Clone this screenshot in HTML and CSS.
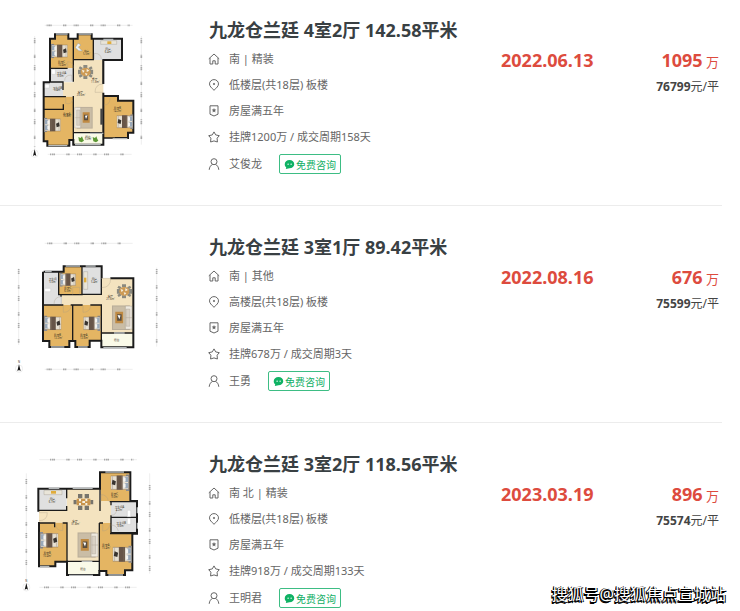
FILE: index.html
```html
<!DOCTYPE html>
<html lang="zh-CN">
<head>
    <meta charset="UTF-8">
    <meta name="viewport" content="width=device-width, initial-scale=1.0">
    <title>九龙仓兰廷 成交记录</title>
    <link rel="stylesheet" href="styles.css">
</head>
<body>
    <svg class="defs" aria-hidden="true">
        <symbol id="home" viewBox="0 0 12 12"><path d="M.8 5.8 6 1l5.200 4.800M2 5v6h2.800V7.800h2.400V11H10V5" /></symbol>
        <symbol id="pin" viewBox="0 0 12 12"><path d="M6 11.300C3.500 8.800 1.500 7.200 1.500 4.900a4.500 4.300 0 0 1 9 0C10.500 7.200 8.500 8.800 6 11.300Z" /><circle cx="6" cy="5" r=".7" /></symbol>
        <symbol id="badge" viewBox="0 0 12 12"><path d="M2 .8h8v8.400L6 11 2 9.200Z" /><path class="solid" d="m6 2.900.7 1.500 1.600.2-1.200 1.200.3 1.600L6 6.600l-1.400.8.3-1.600-1.200-1.200 1.600-.2Z" /></symbol>
        <symbol id="star" viewBox="0 0 12 12"><path d="m6 .9 1.700 3 3.600.8-2.200 2.500.3 3.800L6 9.900 2.600 11l.3-3.800L.7 4.700l3.600-.8Z" /></symbol>
        <symbol id="user" viewBox="0 0 12 12"><circle cx="6" cy="3.700" r="3" /><path d="M1.200 11.800C1.400 8.900 3 7 4.600 6.400M7.400 6.400C9 7 10.600 8.900 10.800 11.800" /></symbol>
        <symbol id="chat" viewBox="0 0 12 12"><path d="M6 1.200c3 0 5.200 1.900 5.200 4.400S9 10 6 10L2 11l.4-2C1.300 8.200.8 7 .8 5.600.8 3.100 3 1.200 6 1.200Z" fill="#0fb264" /><circle cx="4.500" cy="5.600" r=".8" fill="#fff" /><circle cx="7.800" cy="5.600" r=".8" fill="#fff" /></symbol>

        <!-- furniture -->
        <symbol id="bed" viewBox="0 0 50 44">
            <path d="M0 0h9v44H0z" fill="#8b8d90" /><path d="M2 4h48v36H2z" fill="#e7e0d2" stroke="#675548" />
            <path d="M3 6h9v14H3zM3 23h9v14H3z" fill="#9aa9b9" /><path d="M10 9h6v10h-6zM10 25h6v10h-6z" fill="#f5f3ef" />
            <path d="M18 3h16v38H18z" fill="#675548" /><path d="M21 3v38M45 5v34" stroke="#8f7e6d" />
            <path d="m36 18 9-4 2 12-9 3z" fill="#38332f" />
        </symbol>
        <symbol id="dining" viewBox="0 0 46 42">
            <path d="M16 0h12v9H16zM16 33h12v9H16zM0 14h10v14H0zM36 14h10v14H36zM6 4l9 5-5 6-8-5zM40 4l-9 5 5 6 8-5zM6 38l9-5-5-6-8 5zM40 38l-9-5 5-6 8 5z" fill="#8b8a80" />
            <ellipse cx="23" cy="21" rx="15" ry="13" fill="#cd9a54" /><path d="m12 14 8 3-5 7zM26 11l8 6-8 4zM21 24l8 2-5 6z" fill="#f6f2e3" />
        </symbol>
        <symbol id="dining-long" viewBox="0 0 60 48">
            <path d="M14 0h13v13H14zM34 0h13v13H34zM14 35h13v13H14zM34 35h13v13H34zM0 18h10v13H0zM51 18h10v13H51z" fill="#77746c" />
            <path d="M10 14h41v20H10z" fill="#c9944c" /><path d="M17 15h6v7h-6zM36 15h6v7h-6zM17 27h6v6h-6zM36 27h6v6h-6zM27 21h8v6h-8z" fill="#f6f2e3" />
        </symbol>
        <symbol id="sofa" viewBox="0 0 54 66">
            <path d="M6 0h48v66H6z" fill="#b9ad99" /><path d="M9 3h42v60H9z" fill="#cabda6" />
            <path d="M0 2h18v62H0z" fill="#eee9df" stroke="#92877a" /><path d="M6 10h10v46H6zM0 33h17" fill="#d9d1c4" stroke="#a69b8c" />
            <path d="M24 17h21v31H24z" fill="#bf8a43" /><path d="M28 24h12v17H28z" fill="#594e40" /><path d="m31 27 8-1-5 11z" fill="#fff" />
        </symbol>
        <symbol id="north" viewBox="0 0 24 40"><circle cx="12" cy="26" r="11" fill="none" stroke="#ccc" /><path d="m12 13-5 20 5-3 5 3z" fill="#171717" /></symbol>
    </svg>

    <main class="deals">
        <article class="deal">
            <svg class="plan" viewBox="0 -10 570 480" role="img" aria-label="4室2厅户型图">
                <path class="dims" d="M134 36H398M143 423H395M104 68V410M424 68V394" />
                <path class="marks" d="M140 36H390M150 423H386M104 75V400M424 75V385" />
                <path class="hall" d="M220 140H310V370H220V250H189V207H220Z" />
                <path class="wood" d="M150 76H165V63H205V76H233V63H275V76H280V138H220V165H150ZM131 250H220V380H208V396H142V384H131ZM310 248H354V262H400V358H384V374H310Z" />
                <path class="tile" d="M282 76H366V140H282ZM150 165H220V206H150ZM131 207H189V250H131Z" />
                <path class="balcony" d="M220 358H310V394H220Z" />
                <path class="wall" d="M150 206V76H165V63H205V76H233V63H275V76H366V140H310V212M310 238V248H354V262H400V358H384V374H345M310 248V394H220V380H208V397H142V384H131V207H150" />
                <path class="wall thin" d="M220 76V205M280 76V139H222M150 165H203M150 206H189V230M131 250H198M220 248V394M131 288H190V273M222 358H308M310 140V212M310 374H345" />
                <path class="window" d="M168 62H203M236 62H274M310 78H340M145 397H202M225 394H302M338 376H382M270 360H310" />
                <path class="door" d="M203 165V145Q220 145 220 165M283 138V120Q304 120 304 138M194 202Q194 185 215 185V202M310 212Q285 212 285 237H310M197 250V270Q214 275 218 260M312 275Q330 275 330 255" />
                <use href="#bed" x="153" y="91" width="50" height="44" />
                <use href="#bed" x="132" y="313" width="50" height="44" />
                <use href="#bed" x="-400" y="303" width="50" height="44" transform="scale(-1 1)" />
                <use href="#dining" x="234" y="155" width="46" height="42" />
                <use href="#sofa" x="223" y="280" width="56" height="66" />
                <path d="M234 90l9 5-8 6 12 12-11-1-10-9z" fill="#eef2f4" stroke="#77848b" />
                <path d="M302 82h48v11h-48z" fill="#e9e5d9" stroke="#918b80" /><path d="M322 84h12v8h-12z" fill="#e0ac3b" />
                <path d="M301 286h8v48h-8z" fill="#444" />
                <path d="m235 371 7 3 4-5 3 8 3 5-7 5-8-3zM278 371l7 3 4-5 3 8 3 5-7 5-8-3z" fill="#5c9835" />
                <path d="M155 168h11v15h-11zM135 213h13v11h-13z" fill="#fff" stroke="#bbb" />
                <g class="labels"><text x="174" y="149">卧室C</text><text x="174" y="157">10.4m²</text><text x="251" y="117">书房</text><text x="249" y="125">5.5m²</text><text x="316" y="111">厨房</text><text x="314" y="119">6.4m²</text><text x="170" y="183">卫生间A</text><text x="172" y="191">3.6m²</text><text x="158" y="226">卫生间B</text><text x="162" y="234">3.4m²</text><text x="276" y="200">餐厅</text><text x="273" y="208">11.3m²</text><text x="233" y="239">客厅</text><text x="230" y="247">23.6m²</text><text x="190" y="304">卧室A</text><text x="188" y="312">16.8m²</text><text x="342" y="287">卧室B</text><text x="340" y="295">14.2m²</text><text x="256" y="373">阳台</text><text x="254" y="381">5.2m²</text></g>
                <use href="#north" x="92" y="395" width="24" height="40" />
            </svg>
            <div class="info">
                <h2>九龙仓兰廷 4室2厅 142.58平米</h2>
                <ul>
                    <li><svg class="icon"><use href="#home" /></svg>南 | 精装</li>
                    <li><svg class="icon"><use href="#pin" /></svg>低楼层(共18层) 板楼</li>
                    <li><svg class="icon"><use href="#badge" /></svg>房屋满五年</li>
                    <li><svg class="icon"><use href="#star" /></svg>挂牌1200万 / 成交周期158天</li>
                </ul>
                <div class="agent">
                    <svg class="icon"><use href="#user" /></svg>
                    <span>艾俊龙</span>
                    <button type="button"><svg><use href="#chat" /></svg>免费咨询</button>
                </div>
            </div>
            <div class="date">2022.06.13</div>
            <div class="price">
                <p class="total"><strong>1095</strong> 万</p>
                <p class="unit"><strong>76799</strong>元/平</p>
            </div>
        </article>

        <article class="deal">
            <svg class="plan" viewBox="0 6 570 480" role="img" aria-label="3室1厅户型图">
                <path class="dims" d="M134 55H398M134 433H398M56 130V360M470 128V365" />
                <path class="marks" d="M142 55H362M140 433H365M56 132V360M470 132V362" />
                <path class="hall" d="M180 208H304V160H400V324H304V240H180Z" />
                <path class="wood" d="M176 140H191V124H246V209H176ZM131 240H304V347H269V366H226V348H208V366H148V348H131Z" />
                <path class="tile" d="M131 140H176V210H186V240H131ZM248 124H305V208H248Z" />
                <path class="balcony" d="M304 324H400V366H304Z" />
                <path class="wall" d="M131 140H191V124H305V160M331 160H400V367H304V347H269V366H226V348H208V366H148V348H129V140" />
                <path class="wall thin" d="M176 140V209H246V126M246 208H304V160M131 240H190M212 240H248M271 240H304V347M218 240V348M305 324H400M183 209V215" />
                <path class="window" d="M197 123H240M257 123H287M135 140H155M153 366H193M234 366H263M310 368H380M342 324H374" />
                <path class="door" d="M305 160H332Q332 188 305 188M162 238Q162 215 184 215V238M190 241V262Q211 262 214 242M249 241V262Q270 262 272 242M218 209V187H239V208" />
                <use href="#bed" x="177" y="143" width="52" height="42" />
                <use href="#bed" x="132" y="270" width="52" height="50" />
                <use href="#bed" x="-302" y="270" width="52" height="50" transform="scale(-1 1)" />
                <use href="#dining" x="350" y="177" width="46" height="44" />
                <use href="#sofa" x="-397" y="241" width="62" height="74" transform="scale(-1 1)" />
                <path d="M251 140h12v53h-12z" fill="#e9e5d9" stroke="#918b80" /><path d="M252 158h7v14h-7z" fill="#e0ac3b" />
                <path d="M134 190h18v10h-18z" fill="#fff" stroke="#bbb" />
                <g class="labels"><text x="146" y="166">卫生间</text><text x="148" y="174">5.0m²</text><text x="193" y="192">卧室C</text><text x="193" y="200">6.5m²</text><text x="275" y="166">厨房</text><text x="273" y="174">5.4m²</text><text x="323" y="217">客厅</text><text x="319" y="226">27.6m²</text><text x="162" y="334">卧室B</text><text x="162" y="343">12.2m²</text><text x="241" y="334">卧室A</text><text x="240" y="343">12.6m²</text><text x="342" y="349">阳台</text><text x="54" y="413">N</text></g>
                <use href="#north" x="45" y="405" width="24" height="40" />
            </svg>
            <div class="info">
                <h2>九龙仓兰廷 3室1厅 89.42平米</h2>
                <ul>
                    <li><svg class="icon"><use href="#home" /></svg>南 | 其他</li>
                    <li><svg class="icon"><use href="#pin" /></svg>高楼层(共18层) 板楼</li>
                    <li><svg class="icon"><use href="#badge" /></svg>房屋满五年</li>
                    <li><svg class="icon"><use href="#star" /></svg>挂牌678万 / 成交周期3天</li>
                </ul>
                <div class="agent">
                    <svg class="icon"><use href="#user" /></svg>
                    <span>王勇</span>
                    <button type="button"><svg><use href="#chat" /></svg>免费咨询</button>
                </div>
            </div>
            <div class="date">2022.08.16</div>
            <div class="price">
                <p class="total"><strong>676</strong> 万</p>
                <p class="unit"><strong>75599</strong>元/平</p>
            </div>
        </article>

        <article class="deal">
            <svg class="plan" viewBox="0 -3 570 480" role="img" aria-label="3室2厅户型图">
                <path class="dims" d="M118 44H411M118 427H410M79 85V405M449 85V386" />
                <path class="marks" d="M150 44H400M132 427H404M79 102V380M449 120V380" />
                <path class="hall" d="M200 131H298V168H333V234H298V349H200V233H117V198H200Z" />
                <path class="wood" d="M302 82H389V168H302ZM117 233H201V350H166V363H117ZM298 234H333V266H397V376H375V389H319V378H298Z" />
                <path class="tile" d="M117 131H200V196H117ZM333 170H411V266H333Z" />
                <path class="balcony" d="M201 349H298V390H201Z" />
                <path class="wall" d="M115 200V131H300V82H391V168H411V266H397V376H375V390H319V378H298V390H201V350H166V364H117V231" />
                <path class="wall thin" d="M117 196H200V183M200 131V160M300 131V198M329 170H411M333 170V181M333 211V263H410M333 217H411M117 234H164V247M188 234H201V350M298 234V378M298 234H309M201 349H298M330 266H397" />
                <path class="window" d="M146 130H178M218 130H278M316 81H372M120 364H148M207 391H279M325 390H369M245 349H277M412 187V205M412 233V251" />
                <path class="door" d="M117 203H142Q142 227 117 227M166 234Q166 257 188 257V234M303 169V149Q322 149 325 169M308 237V258Q326 258 330 238M333 211Q350 211 350 191M333 240Q350 240 355 258" />
                <use href="#bed" x="119" y="260" width="56" height="52" />
                <use href="#bed" x="-388" y="87" width="56" height="52" transform="scale(-1 1)" />
                <use href="#bed" x="-396" y="301" width="58" height="54" transform="scale(-1 1)" />
                <use href="#dining-long" x="220" y="147" width="60" height="48" />
                <use href="#sofa" x="-294" y="262" width="62" height="76" transform="scale(-1 1)" />
                <path d="M132 136h54v13h-54z" fill="#e9e5d9" stroke="#918b80" /><path d="M153 138h15v8h-15z" fill="#e0ac3b" />
                <path d="M382 196h10v19h-10zM382 220h10v18h-10z" fill="#fff" stroke="#bbb" />
                <g class="labels"><text x="149" y="164">厨房</text><text x="146" y="173">6.7m²</text><text x="217" y="231">客厅</text><text x="214" y="240">31.8m²</text><text x="333" y="150">卧室C</text><text x="334" y="159">9.0m²</text><text x="344" y="189">卫生间A</text><text x="347" y="197">4.2m²</text><text x="349" y="237">卫生间B</text><text x="352" y="245">3.6m²</text><text x="131" y="326">卧室B</text><text x="129" y="335">10.4m²</text><text x="307" y="303">卧室A</text><text x="305" y="313">15.4m²</text><text x="241" y="374">阳台</text><text x="76" y="411">N</text></g>
                <use href="#north" x="67" y="401" width="24" height="40" />
            </svg>
            <div class="info">
                <h2>九龙仓兰廷 3室2厅 118.56平米</h2>
                <ul>
                    <li><svg class="icon"><use href="#home" /></svg>南 北 | 精装</li>
                    <li><svg class="icon"><use href="#pin" /></svg>低楼层(共18层) 板楼</li>
                    <li><svg class="icon"><use href="#badge" /></svg>房屋满五年</li>
                    <li><svg class="icon"><use href="#star" /></svg>挂牌918万 / 成交周期133天</li>
                </ul>
                <div class="agent">
                    <svg class="icon"><use href="#user" /></svg>
                    <span>王明君</span>
                    <button type="button"><svg><use href="#chat" /></svg>免费咨询</button>
                </div>
            </div>
            <div class="date">2023.03.19</div>
            <div class="price">
                <p class="total"><strong>896</strong> 万</p>
                <p class="unit"><strong>75574</strong>元/平</p>
            </div>
            <div class="watermark">搜狐号@搜狐焦点宣城站</div>
        </article>
    </main>
</body>
</html>
```

FILE: styles.css
```css
* {
    box-sizing: border-box;
}
body {
    margin: 0;
    background-color: #fff;
    color: #666;
    font-family: "Noto Sans", "Noto Sans CJK SC", sans-serif;
    font-size: 12px;
}
h2, p, ul {
    margin: 0;
    padding: 0;
}
.defs {
    display: block;
    width: 0;
    height: 0;
}
.deals {
    margin-right: 18px;
}
.deal {
    position: relative;
    display: grid;
    grid-template-columns: 209px minmax(0, 1fr) 120px 98px;
    align-items: start;
    padding: 21px 3px 27px 0;
    border-bottom: 1px solid #ececec;
}
.deal:first-child {
    padding-top: 10px;
}
.deal:last-child {
    padding-bottom: 0;
    border-bottom: 0;
}

/* floor plan */
.plan {
    display: block;
    width: 190px;
    height: 160px;
}
.wood {
    fill: #e4b563;
}
.hall {
    fill: #f4e3bf;
}
.tile {
    fill: #e0e0e0;
}
.balcony {
    fill: #fafae8;
}
.wall {
    fill: none;
    stroke: #1b1b1b;
    stroke-width: 6;
}
.wall.thin {
    stroke-width: 4;
}
.window {
    fill: none;
    stroke: #b5b9ba;
    stroke-width: 4;
}
.door {
    fill: none;
    stroke: #a89b86;
    stroke-width: 1;
}
.dims {
    fill: none;
    stroke: #ccc;
    stroke-width: 1;
}
.marks {
    fill: none;
    stroke: #aaa;
    stroke-width: 5;
    stroke-dasharray: 3 2 5 1 4 34 3 1 6 22;
}
.labels {
    fill: #3c3527;
    font-size: 8px;
}

/* deal info */
.info {
    font-size: 11px;
    line-height: 26px;
}
h2 {
    padding-top: 4px;
    color: #394043;
    font-size: 18px;
    line-height: 32px;
    white-space: nowrap;
}
ul {
    margin-bottom: 1px;
    list-style: none;
}
li, .agent {
    display: flex;
    align-items: center;
    white-space: nowrap;
}
.agent {
    margin-bottom: 1px;
}
.icon {
    width: 12px;
    height: 12px;
    margin-right: 9px;
    margin-left: -1px;
    fill: none;
    stroke: #666;
    stroke-width: 1;
}
.solid {
    fill: #666;
    stroke: none;
}
.agent button {
    display: flex;
    align-items: center;
    justify-content: center;
    width: 62px;
    height: 20px;
    margin-left: 17px;
    padding: 0;
    background-color: #fff;
    border: 1px solid #3dbd84;
    border-radius: 2px;
    color: #0fae64;
    font-family: inherit;
    font-size: 10px;
    cursor: pointer;
}
.agent button svg {
    width: 11px;
    height: 11px;
    margin-right: 1px;
}
.date, .total {
    padding-top: 37px;
    color: #dd4b3e;
    font-size: 18px;
    font-weight: bold;
    line-height: 26px;
}
.price {
    text-align: right;
}
.total {
    font-size: 13px;
    font-weight: normal;
}
.total strong {
    font-size: 18px;
}
.unit {
    color: #444;
    font-size: 12px;
    line-height: 24px;
}
.watermark {
    position: absolute;
    right: -4px;
    bottom: 6px;
    color: #fff;
    font-size: 16px;
    line-height: 24px;
    text-shadow: -1px 1px 0 #000, 1px 1px 0 #000, -1px 2px 0 #000, -1px 0 0 #000;
    white-space: nowrap;
}
```
